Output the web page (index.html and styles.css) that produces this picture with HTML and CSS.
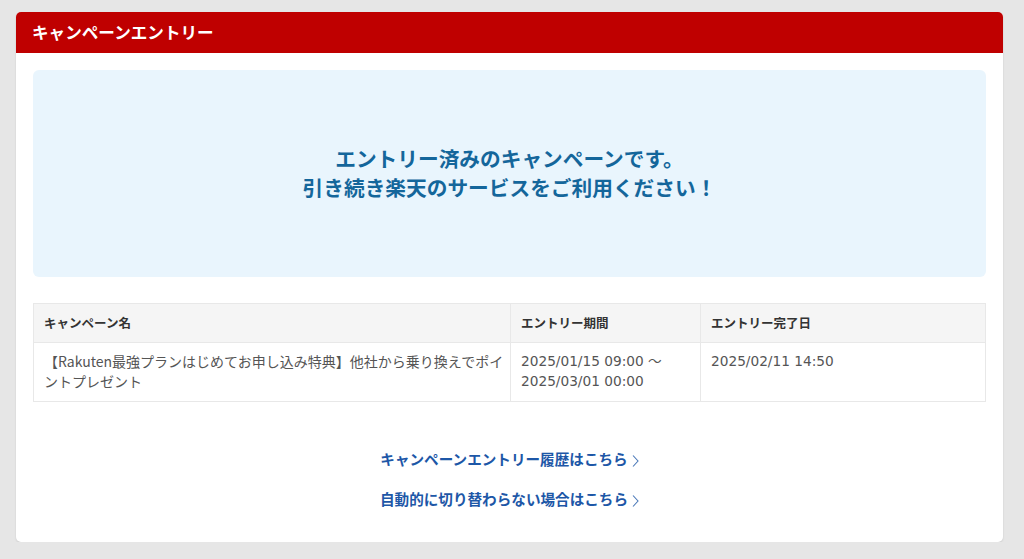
FILE: index.html
```html
<!DOCTYPE html>
<html lang="ja">
<head>
<meta charset="utf-8">
<link rel="stylesheet" href="styles.css">
</head>
<body>
<div class="card">
  <div class="card-header">キャンペーンエントリー</div>
  <div class="card-body">
    <div class="notice">
      <p>エントリー済みのキャンペーンです。<br>引き続き楽天のサービスをご利用ください！</p>
    </div>
    <table class="entries">
      <thead>
        <tr>
          <th class="col-name">キャンペーン名</th>
          <th class="col-period">エントリー期間</th>
          <th class="col-date">エントリー完了日</th>
        </tr>
      </thead>
      <tbody>
        <tr>
          <td class="name">【Rakuten最強プランはじめてお申し込み特典】他社から乗り換えでポイントプレゼント</td>
          <td class="num">2025/01/15 09:00 ～<br>2025/03/01 00:00</td>
          <td class="num">2025/02/11 14:50</td>
        </tr>
      </tbody>
    </table>
    <div class="links">
      <a class="link" href="#">キャンペーンエントリー履歴はこちら<svg class="chev" width="7" height="14" viewBox="0 0 7 14"><path d="M1 1.5 L6 7 L1 12.5" fill="none" stroke="currentColor" stroke-width="1.1"/></svg></a>
      <a class="link" href="#">自動的に切り替わらない場合はこちら<svg class="chev" width="7" height="14" viewBox="0 0 7 14"><path d="M1 1.5 L6 7 L1 12.5" fill="none" stroke="currentColor" stroke-width="1.1"/></svg></a>
    </div>
  </div>
</div>
</body>
</html>
```

FILE: styles.css
```css
html, body {
  margin: 0;
  padding: 0;
}
body {
  background: #e6e6e6;
  font-family: "Noto Sans CJK JP", "Noto Sans", sans-serif;
  color: #333;
  padding: 12px 21px 0 16px;
}
.card {
  background: #fff;
  border-radius: 5px;
  box-shadow: 0 1px 2px rgba(0,0,0,0.12);
  overflow: hidden;
  width: 987px;
}
.card-header {
  background: #bf0000;
  color: #fff;
  font-weight: bold;
  font-size: 16.6px;
  height: 41px;
  line-height: 40px;
  padding-left: 16px;
}
.card-body {
  padding: 17px 17px 33px 17px;
}
.notice {
  background: #e9f5fd;
  border-radius: 6px;
  height: 207px;
  display: flex;
  align-items: center;
  justify-content: center;
}
.notice p {
  margin: 0;
  text-align: center;
  color: #14669b;
  font-weight: bold;
  font-size: 20.7px;
  line-height: 29px;
  padding-bottom: 2px;
}
.entries {
  margin-top: 26px;
  width: 100%;
  border-collapse: collapse;
  font-size: 14px;
}
.entries th, .entries td {
  border: 1px solid #e8e8e8;
  text-align: left;
  vertical-align: top;
}
.entries th {
  background: #f5f5f5;
  font-size: 12.5px;
  font-weight: bold;
  color: #333;
  height: 38px;
  padding: 0 10px;
  vertical-align: middle;
  line-height: 18px;
}
.entries td {
  color: #555;
  line-height: 20px;
  padding: 8px 10px 10px 10px;
}
.entries td.name {
  padding-right: 2px;
}
.entries td.num {
  font-family: "DejaVu Sans", "Noto Sans CJK JP", sans-serif;
  font-size: 13.7px;
}
.col-name { width: 456px; }
.col-period { width: 169px; }
.links {
  margin-top: 47px;
  display: flex;
  flex-direction: column;
  align-items: center;
  gap: 20px;
}
.link {
  color: #1d57a7;
  font-weight: bold;
  font-size: 14.6px;
  text-decoration: none;
  line-height: 20px;
  display: flex;
  align-items: center;
}
.chev {
  margin-left: 4px;
  margin-top: 3px;
  color: #4a78b8;
}
```
